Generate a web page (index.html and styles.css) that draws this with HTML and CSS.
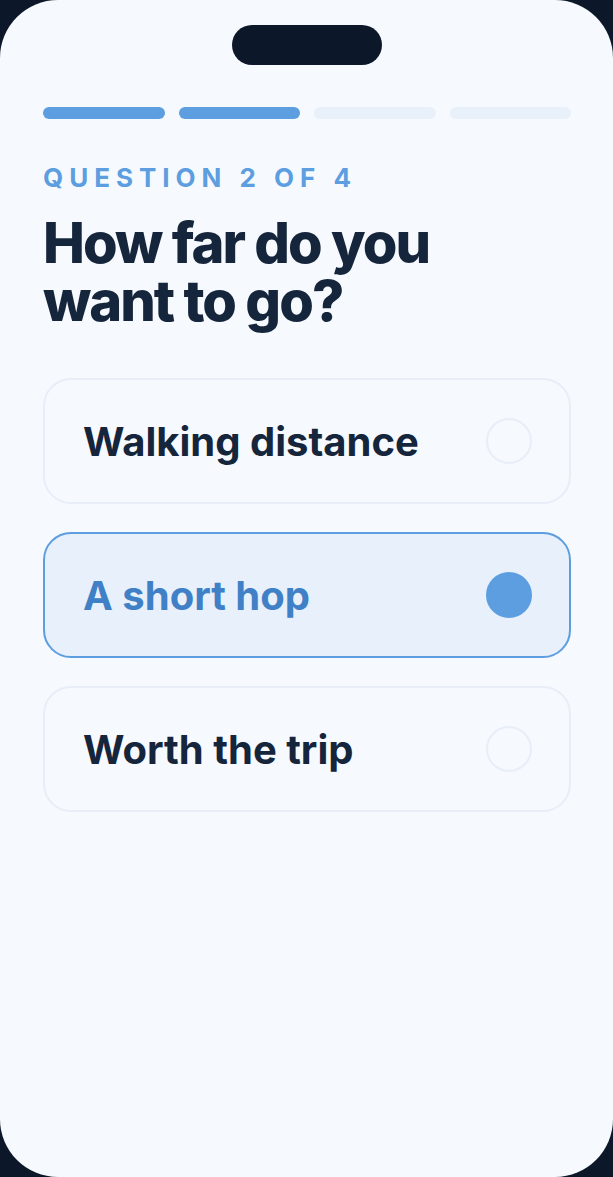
FILE: index.html
```html
<!DOCTYPE html>
<html lang="en">
<head>
    <meta charset="utf-8">
    <title>Question 2 of 4</title>
    <link rel="stylesheet" href="styles.css">
</head>
<body>
    <div class="screen">
        <div class="notch"></div>

        <div class="content">
            <div class="progress">
                <span class="step done"></span>
                <span class="step done"></span>
                <span class="step"></span>
                <span class="step"></span>
            </div>

            <p class="label">Question 2 of 4</p>
            <h1 class="title">How far do you<br>want to go?</h1>

            <div class="options">
                <div class="option">
                    <span class="option-text">Walking distance</span>
                    <span class="radio"></span>
                </div>
                <div class="option selected">
                    <span class="option-text">A short hop</span>
                    <span class="radio"></span>
                </div>
                <div class="option">
                    <span class="option-text">Worth the trip</span>
                    <span class="radio"></span>
                </div>
            </div>
        </div>
    </div>
</body>
</html>
```

FILE: styles.css
```css
html, body {
    margin: 0;
    padding: 0;
    height: 100%;
}
body {
    background: #0c1829;
    font-family: Inter, "Noto Sans", sans-serif;
    overflow: hidden;
}
.screen {
    height: 100%;
    background: #f6f9fd;
    border-radius: 58px;
    display: flex;
    flex-direction: column;
    align-items: center;
}
.notch {
    width: 150px;
    height: 40px;
    margin-top: 25px;
    background: #0c1829;
    border-radius: 20px;
}
.content {
    align-self: stretch;
    padding: 0 42px 0 43px;
}
.progress {
    display: flex;
    gap: 14px;
    margin-top: 42px;
}
.step {
    flex: 1;
    height: 12px;
    border-radius: 6px;
    background: #e8f0fa;
}
.step.done {
    background: #5c9ee0;
}
.label {
    margin: 43px 0 0;
    font-size: 26px;
    font-weight: 700;
    letter-spacing: 0.23em;
    text-transform: uppercase;
    color: #5c9ee0;
    line-height: 32px;
}
.title {
    margin: 20px 0 0;
    font-size: 56px;
    font-weight: 800;
    letter-spacing: -0.035em;
    line-height: 58px;
    color: #15253b;
}
.options {
    display: flex;
    flex-direction: column;
    gap: 28px;
    margin-top: 48px;
}
.option {
    height: 126px;
    box-sizing: border-box;
    border: 2px solid #e7eef8;
    border-radius: 28px;
    padding: 0 37px 0 38px;
    display: flex;
    align-items: center;
    justify-content: space-between;
}
.option-text {
    font-size: 40px;
    font-weight: 700;
    color: #15253b;
}
.radio {
    width: 46px;
    height: 46px;
    box-sizing: border-box;
    border: 2px solid #e7eef8;
    border-radius: 50%;
}
.option.selected {
    background: #e7f0fb;
    border-color: #5c9ee0;
}
.option.selected .option-text {
    color: #3f80c6;
}
.option.selected .radio {
    background: #5c9ee0;
    border-color: #5c9ee0;
}
```
